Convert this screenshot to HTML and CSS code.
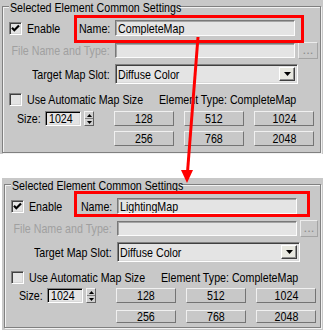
FILE: index.html
```html
<!DOCTYPE html>
<html>
<head>
<meta charset="utf-8">
<link rel="stylesheet" href="styles.css">
</head>
<body>
<div class="panel panel--a">
  <div class="group">
    <span class="legend"><span class="n">Selected Element Common Settings</span></span>
    <div class="frow frow--name">
      <div class="lbl-cell lbl-cell--split">
        <span class="check"><svg width="9" height="9" viewBox="0 0 9 9"><path d="M1 3.8 L3.3 6.2 L8 1.5" stroke="#000" stroke-width="2.2" fill="none"/></svg></span>
        <span class="check-text"><span class="n">Enable</span></span>
        <span class="lbl"><span class="n n--r">Name:</span></span>
      </div>
      <div class="field"><span class="n">CompleteMap</span></div>
    </div>
    <div class="frow frow--file">
      <div class="lbl-cell disabled"><span class="n n--r">File Name and Type:</span></div>
      <div class="field field--file"></div>
      <div class="dots">...</div>
    </div>
    <div class="frow frow--slot">
      <div class="lbl-cell"><span class="n n--r">Target Map Slot:</span></div>
      <div class="combo"><span class="n">Diffuse Color</span><span class="combo-btn"><svg width="7" height="4" viewBox="0 0 7 4"><path d="M0 0h7L3.5 4z" fill="#000"/></svg></span></div>
    </div>
    <div class="arow">
      <div class="arow-left"><span class="check"></span><span class="check-text"><span class="n">Use Automatic Map Size</span></span></div>
      <span class="arow-type"><span class="n">Element Type: CompleteMap</span></span>
    </div>
    <div class="sgrid">
      <div class="size">
        <span class="size-lbl"><span class="n">Size:</span></span>
        <span class="spin-field"><span class="n">1024</span></span>
        <span class="spin"><span class="spin-up"><svg width="5" height="3" viewBox="0 0 5 3"><path d="M2.5 0L5 3H0z" fill="#000"/></svg></span><span class="spin-down"><svg width="5" height="3" viewBox="0 0 5 3"><path d="M0 0h5L2.5 3z" fill="#000"/></svg></span></span>
      </div>
      <div class="btn"><span class="n n--c">128</span></div>
      <div class="btn"><span class="n n--c">512</span></div>
      <div class="btn"><span class="n n--c">1024</span></div>
      <div></div>
      <div class="btn"><span class="n n--c">256</span></div>
      <div class="btn"><span class="n n--c">768</span></div>
      <div class="btn"><span class="n n--c">2048</span></div>
    </div>
  </div>
  <div class="mark mark--a"></div>
</div>

<div class="panel panel--b">
  <div class="group">
    <span class="legend"><span class="n">Selected Element Common Settings</span></span>
    <div class="frow frow--name">
      <div class="lbl-cell lbl-cell--split">
        <span class="check"><svg width="9" height="9" viewBox="0 0 9 9"><path d="M1 3.8 L3.3 6.2 L8 1.5" stroke="#000" stroke-width="2.2" fill="none"/></svg></span>
        <span class="check-text"><span class="n">Enable</span></span>
        <span class="lbl"><span class="n n--r">Name:</span></span>
      </div>
      <div class="field"><span class="n">LightingMap</span></div>
    </div>
    <div class="frow frow--file">
      <div class="lbl-cell disabled"><span class="n n--r">File Name and Type:</span></div>
      <div class="field field--file"></div>
      <div class="dots">...</div>
    </div>
    <div class="frow frow--slot">
      <div class="lbl-cell"><span class="n n--r">Target Map Slot:</span></div>
      <div class="combo"><span class="n">Diffuse Color</span><span class="combo-btn"><svg width="7" height="4" viewBox="0 0 7 4"><path d="M0 0h7L3.5 4z" fill="#000"/></svg></span></div>
    </div>
    <div class="arow">
      <div class="arow-left"><span class="check"></span><span class="check-text"><span class="n">Use Automatic Map Size</span></span></div>
      <span class="arow-type"><span class="n">Element Type: CompleteMap</span></span>
    </div>
    <div class="sgrid">
      <div class="size">
        <span class="size-lbl"><span class="n">Size:</span></span>
        <span class="spin-field"><span class="n">1024</span></span>
        <span class="spin"><span class="spin-up"><svg width="5" height="3" viewBox="0 0 5 3"><path d="M2.5 0L5 3H0z" fill="#000"/></svg></span><span class="spin-down"><svg width="5" height="3" viewBox="0 0 5 3"><path d="M0 0h5L2.5 3z" fill="#000"/></svg></span></span>
      </div>
      <div class="btn"><span class="n n--c">128</span></div>
      <div class="btn"><span class="n n--c">512</span></div>
      <div class="btn"><span class="n n--c">1024</span></div>
      <div></div>
      <div class="btn"><span class="n n--c">256</span></div>
      <div class="btn"><span class="n n--c">768</span></div>
      <div class="btn"><span class="n n--c">2048</span></div>
    </div>
  </div>
  <div class="mark mark--b"></div>
</div>

<svg class="arrow" width="323" height="330" viewBox="0 0 323 330">
  <line x1="198" y1="37" x2="187.5" y2="172" stroke="#f00" stroke-width="3"/>
  <polygon points="181,170 193,170 187,183" fill="#f00"/>
</svg>
</body>
</html>
```

FILE: styles.css
```css
html, body {
  margin: 0;
  padding: 0;
}
body {
  position: relative;
  width: 323px;
  height: 330px;
  overflow: hidden;
  background: #fff;
  color: #000;
  font-family: "Liberation Sans", Arial, sans-serif;
  font-size: 13px;
  line-height: 13px;
}

/* condensed glyphs, as in the scaled-down original capture */
.n {
  display: inline-block;
  white-space: nowrap;
  transform: scaleX(0.82);
  transform-origin: left center;
}
.n--r { transform-origin: right center; }
.n--c { transform-origin: center center; }

.panel {
  position: relative;
  width: 323px;
  height: 154px;
  box-sizing: border-box;
  padding-top: 6px;
  background: #c8c8c8;
}
.panel--b {
  margin-top: 24px;
  margin-left: 2px;
  width: 321px;
  height: 152px;
}

.group {
  position: relative;
  margin-left: 2px;
  width: 319px;
  height: 147px;
  box-sizing: border-box;
  border: 1px solid #808080;
  box-shadow: inset 1px 1px 0 #f2f2f2, 1px 1px 0 #f2f2f2;
}
.panel--b .group {
  margin-left: 2px;
  width: 317px;
  height: 144px;
}

.legend {
  position: absolute;
  top: -6px;
  left: 6px;
  width: 168px;
  height: 13px;
  padding: 0 1px;
  background: #c8c8c8;
  white-space: nowrap;
}

.frow {
  display: grid;
  grid-template-columns: 109px 180px 20px;
  column-gap: 3px;
}
.panel--b .frow {
  grid-template-columns: 109px 180px 18px;
}
.frow--name { margin-top: 13px; height: 16px; }
.frow--file { margin-top: 6px; height: 17px; }
.frow--slot { margin-top: 5px; height: 20px; }

.lbl-cell {
  display: flex;
  align-items: center;
  justify-content: flex-end;
  padding-right: 2px;
  white-space: nowrap;
}
.lbl-cell--split { justify-content: flex-start; }
.lbl-cell--split .lbl { margin-left: auto; }
.disabled { color: #a0a0a0; }

.check {
  flex: none;
  display: flex;
  align-items: center;
  justify-content: center;
  width: 13px;
  height: 13px;
  margin-left: 6px;
  box-sizing: border-box;
  border: 1px solid;
  border-color: #808080 #fff #fff #808080;
  box-shadow: inset 1px 1px 0 #404040, inset -1px -1px 0 #d4d4d4;
  background: #e4e4e4;
}
.check svg { display: block; }
.check-text { margin-left: 5px; white-space: nowrap; }

.field {
  height: 16px;
  box-sizing: border-box;
  border: 1px solid;
  border-color: #787878 #fcfcfc #fcfcfc #787878;
  box-shadow: inset 1px 1px 0 #a4a4a4;
  background: #e4e4e4;
  padding: 1px 0 0 2px;
  white-space: nowrap;
  overflow: hidden;
}
.field--file {
  margin-top: 1px;
  height: 15px;
}

.dots {
  height: 17px;
  box-sizing: border-box;
  border: 1px solid;
  border-color: #ececec #a4a4a4 #a4a4a4 #ececec;
  color: #8c8c8c;
  text-align: center;
  line-height: 13px;
}

.combo {
  grid-column: 2 / 4;
  width: 183px;
  height: 20px;
  box-sizing: border-box;
  display: flex;
  align-items: center;
  padding: 0 2px;
  border: 1px solid;
  border-color: #808080 #fff #fff #808080;
  box-shadow: inset 1px 1px 0 #404040, inset -1px -1px 0 #d8d8d8;
  background: #e4e4e4;
  white-space: nowrap;
}
.combo-btn {
  margin-left: auto;
  width: 16px;
  height: 14px;
  box-sizing: border-box;
  display: flex;
  align-items: center;
  justify-content: center;
  border: 1px solid;
  border-color: #fff #404040 #404040 #fff;
  box-shadow: inset -1px -1px 0 #909090;
  background: #e8e8e0;
}
.combo-btn svg { display: block; }

.arow {
  margin-top: 8px;
  height: 14px;
  display: flex;
  align-items: center;
  white-space: nowrap;
}
.arow-left {
  flex: 0 0 156px;
  width: 156px;
  min-width: 0;
  display: flex;
  align-items: center;
}
.arow-type {
  flex: none;
}

.sgrid {
  margin-top: 5px;
  display: grid;
  grid-template-columns: 101px 60px 60px 60px;
  grid-template-rows: 15px 15px;
  column-gap: 10px;
  row-gap: 5px;
}
.panel--b .sgrid {
  margin-top: 4px;
  grid-template-rows: 15px 13px;
  row-gap: 7px;
}

.size {
  display: flex;
  align-items: center;
  padding-left: 14px;
}
.size-lbl { width: 28px; flex: none; }
.spin-field {
  flex: none;
  width: 36px;
  height: 15px;
  box-sizing: border-box;
  padding: 1px 0 0 3px;
  line-height: 12px;
  overflow: hidden;
  border: 1px solid;
  border-color: #808080 #fff #fff #808080;
  box-shadow: inset 1px 1px 0 #000, inset -1px -1px 0 #d8d8d8;
  background: #e4e4e4;
}
.spin {
  flex: none;
  margin-left: 3px;
  width: 10px;
  height: 15px;
  box-sizing: border-box;
  display: flex;
  flex-direction: column;
  border: 1px solid;
  border-color: #f4f4f4 #606060 #606060 #f4f4f4;
  background: #d0d0d0;
}
.spin-up, .spin-down {
  flex: 1;
  display: flex;
  align-items: center;
  justify-content: center;
}
.spin-up { border-bottom: 1px solid #808080; }
.spin svg { display: block; }

.btn {
  box-sizing: border-box;
  border: 1px solid;
  border-color: #f0f0f0 #747474 #747474 #f0f0f0;
  text-align: center;
  line-height: 13px;
}
.panel--b .sgrid .btn:nth-child(n+6) { line-height: 11px; }

.mark {
  position: absolute;
  box-sizing: border-box;
  border: 3px solid #f00;
}
.mark--a { left: 74px; top: 15px; width: 230px; height: 28px; }
.mark--b { left: 72px; top: 13px; width: 236px; height: 26px; }

.arrow {
  position: absolute;
  left: 0;
  top: 0;
  pointer-events: none;
}
```
